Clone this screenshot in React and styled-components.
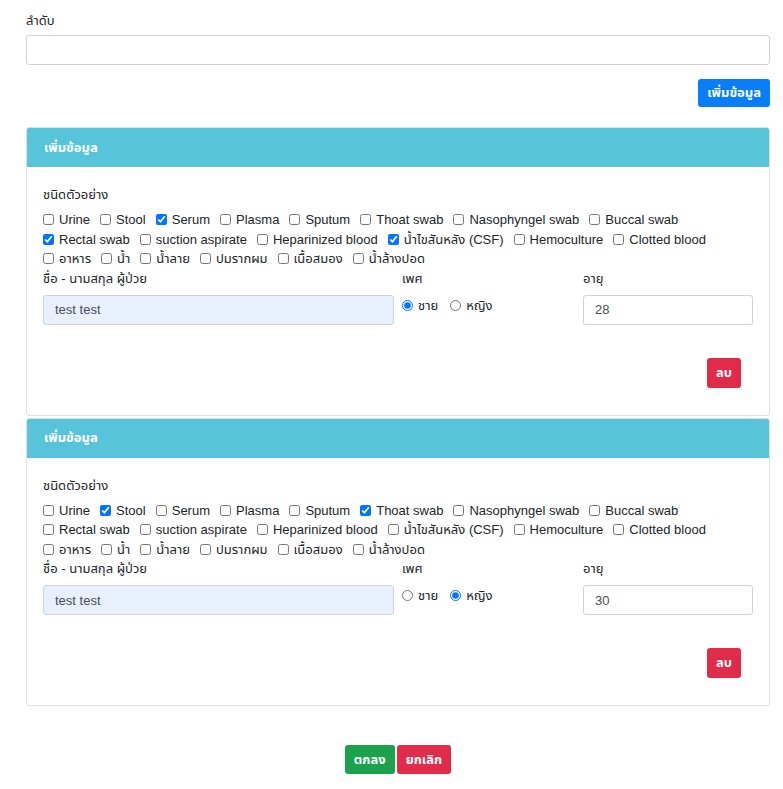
import styled, { createGlobalStyle } from "styled-components";

const GlobalStyle = createGlobalStyle`
  body {
    margin: 0;
    background: #fff;
    font-family: "Liberation Sans", "Noto Sans Thai", "Noto Sans", sans-serif;
    font-size: 13px;
    color: #212529;
  }
  * { box-sizing: border-box; }
`;

const sampleTypes = [
  ["Urine", "Stool", "Serum", "Plasma", "Sputum", "Thoat swab", "Nasophyngel swab", "Buccal swab"],
  ["Rectal swab", "suction aspirate", "Heparinized blood", "น้ำไขสันหลัง (CSF)", "Hemoculture", "Clotted blood"],
  ["อาหาร", "น้ำ", "น้ำลาย", "ปมรากผม", "เนื้อสมอง", "น้ำล้างปอด"],
];

const entries = [
  { id: 1, checked: ["Serum", "Rectal swab", "น้ำไขสันหลัง (CSF)"], name: "test test", sex: "m", age: "28" },
  { id: 2, checked: ["Stool", "Thoat swab"], name: "test test", sex: "f", age: "30" },
];

const Page = styled.div`
  padding: 11px 13px 16px 26px;
`;

const Label = styled.div`
  line-height: 19px;
  margin-bottom: ${(p) => p.$mb || 0}px;
`;

const TextInput = styled.input`
  display: block;
  width: 100%;
  height: 30px;
  padding: 0 11px;
  border: 1px solid #ced4da;
  border-radius: 3px;
  font: inherit;
  font-size: 13px;
  color: #495057;
  background: ${(p) => (p.$filled ? "#e8f0fe" : "#fff")};
  outline: none;
`;

const ButtonRow = styled.div`
  display: flex;
  justify-content: ${(p) => p.$justify || "flex-end"};
  gap: 2px;
  margin-top: ${(p) => p.$mt || 0}px;
  padding-right: ${(p) => p.$pr || 0}px;
`;

const Button = styled.button`
  border: none;
  border-radius: 3px;
  height: ${(p) => p.$h || 28}px;
  padding: 0 ${(p) => p.$px || 9}px;
  background: ${(p) => p.$bg};
  color: #fff;
  font: inherit;
  font-size: 13px;
  font-weight: 700;
`;

const Card = styled.div`
  border: 1px solid #dfe2e5;
  border-radius: 3px;
  margin-top: ${(p) => p.$mt}px;
  overflow: hidden;
`;

const CardHeader = styled.div`
  height: 39px;
  display: flex;
  align-items: center;
  padding: 0 17px;
  background: #57c4da;
  color: #fff;
  font-weight: 700;
`;

const CardBody = styled.div`
  padding: 18px 16px 27px 16px;
`;

const CheckRow = styled.div`
  display: flex;
  flex-wrap: wrap;
  line-height: 19.5px;
`;

const CheckLabel = styled.label`
  display: inline-flex;
  align-items: center;
  margin-right: ${(p) => (p.$tight ? 0 : 10)}px;
  white-space: nowrap;

  input {
    width: 11px;
    height: 11px;
    margin: 0 5px 0 0;
  }
`;

const FieldGrid = styled.div`
  display: grid;
  grid-template-columns: 351fr 173fr 170fr;
  gap: 8px;
`;

const RadioGroup = styled.div`
  display: flex;
  gap: 12px;
  padding-top: 1px;
  line-height: 19px;
`;

const SpecimenCard = ({ entry, first }) => (
  <Card $mt={first ? 20 : 2}>
    <CardHeader>เพิ่มข้อมูล</CardHeader>
    <CardBody>
      <Label $mb={6}>ชนิดตัวอย่าง</Label>
      {sampleTypes.map((row, i) => (
        <CheckRow key={i}>
          {row.map((t) => (
            <CheckLabel key={t}>
              <input type="checkbox" defaultChecked={entry.checked.includes(t)} />
              {t}
            </CheckLabel>
          ))}
        </CheckRow>
      ))}
      <FieldGrid>
        <div>
          <Label $mb={7}>ชื่อ - นามสกุล ผู้ป่วย</Label>
          <TextInput $filled defaultValue={entry.name} />
        </div>
        <div>
          <Label $mb={7}>เพศ</Label>
          <RadioGroup>
            <CheckLabel $tight>
              <input type="radio" name={`sex${entry.id}`} defaultChecked={entry.sex === "m"} />
              ชาย
            </CheckLabel>
            <CheckLabel $tight>
              <input type="radio" name={`sex${entry.id}`} defaultChecked={entry.sex === "f"} />
              หญิง
            </CheckLabel>
          </RadioGroup>
        </div>
        <div>
          <Label $mb={7}>อายุ</Label>
          <TextInput defaultValue={entry.age} />
        </div>
      </FieldGrid>
      <ButtonRow $mt={33} $pr={12}>
        <Button $bg="#e02b4b" $h={30} $px={9}>ลบ</Button>
      </ButtonRow>
    </CardBody>
  </Card>
);

const App = () => (
  <Page>
    <GlobalStyle />
    <Label $mb={5}>ลำดับ</Label>
    <TextInput />
    <ButtonRow $mt={14}>
      <Button $bg="#0a7df8">เพิ่มข้อมูล</Button>
    </ButtonRow>
    {entries.map((e, i) => (
      <SpecimenCard key={e.id} entry={e} first={i === 0} />
    ))}
    <ButtonRow $justify="center" $mt={39}>
      <Button $bg="#1aa34a" $h={29}>ตกลง</Button>
      <Button $bg="#e02b4b" $h={29}>ยกเลิก</Button>
    </ButtonRow>
  </Page>
);

export default App;
